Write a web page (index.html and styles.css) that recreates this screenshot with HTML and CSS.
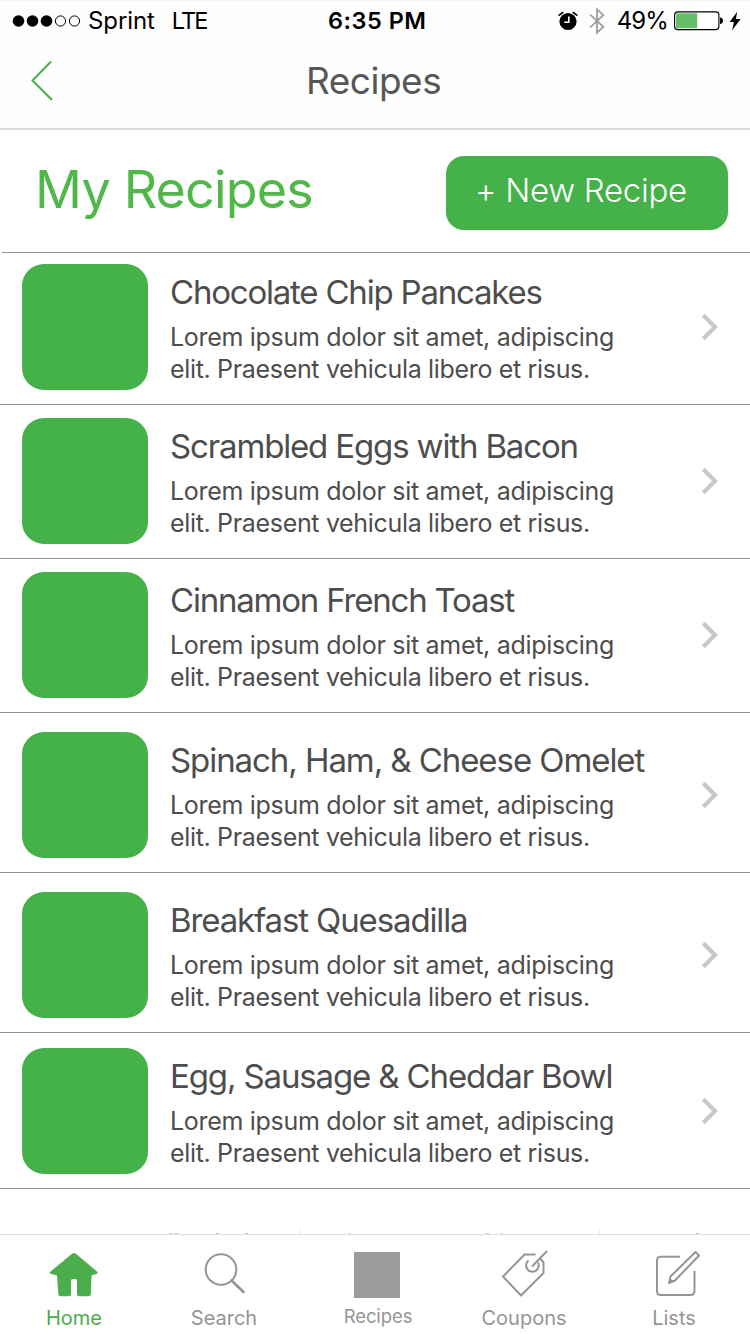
FILE: index.html
```html
<!DOCTYPE html>
<html lang="en">
<head>
<meta charset="utf-8">
<title>Recipes</title>
<link rel="stylesheet" href="styles.css">
</head>
<body>
<div class="screen">
  <header class="top">
    <div class="status">
      <div class="status-left">
        <svg class="signal" width="70" height="14" viewBox="0 0 70 14"><g fill="#000"><circle cx="6.5" cy="7" r="5.8"/><circle cx="20.5" cy="7" r="5.8"/><circle cx="34.5" cy="7" r="5.8"/></g><g fill="none" stroke="#000"><circle cx="48.5" cy="7" r="5.1"/><circle cx="62.5" cy="7" r="5.1"/></g></svg>
        <span class="carrier">Sprint</span>
        <span class="network">LTE</span>
      </div>
      <span class="clock">6:35 PM</span>
      <div class="status-right">
        <svg class="alarm" width="20" height="20" viewBox="0 0 20 20"><circle cx="10" cy="10.5" r="8.6" fill="#000"/><path d="M1.2 4.2 4.8 1.5M18.8 4.2 15.2 1.5" stroke="#000" stroke-width="1.6" stroke-linecap="round"/><path d="M10.8 5.6v5.6H6.2" fill="none" stroke="#fff" stroke-width="1.6"/></svg>
        <svg class="bluetooth" width="18" height="28" viewBox="0 0 18 28"><path d="M2 7.5 15.3 19.8 9 25.8V2.2L15.3 8.2 2 20.5" fill="none" stroke="#999" stroke-width="1.7"/></svg>
        <span class="percent">49%</span>
        <svg class="battery" width="50" height="20" viewBox="0 0 50 20"><rect x=".6" y=".9" width="44.3" height="17.7" rx="3" fill="#fff" stroke="#000" stroke-width="1.1"/><rect x="2" y="2.3" width="21.2" height="15" rx="1" fill="#65bf69"/><path d="M46 6.5q3 .3 3 3.3t-3 3.3z" fill="#000"/></svg>
        <svg class="bolt" width="12" height="20" viewBox="0 0 12 20"><path d="M8.2.8.6 11h4.3L3.2 19.2 11.6 8.1H6.9z" fill="#000"/></svg>
      </div>
    </div>
    <nav class="nav">
      <svg class="back" width="26" height="44" viewBox="0 0 26 44"><path d="M21 2.5 2.500 21.500 22 41" fill="none" stroke="#4bae4b" stroke-width="2"/></svg>
      <h1 class="nav-title">Recipes</h1>
    </nav>
  </header>

  <section class="heading">
    <h2 class="heading-title">My Recipes</h2>
    <button class="new-recipe">+ New Recipe</button>
  </section>

  <ul class="recipes">
    <li class="recipe recipe-first">
      <div class="thumb"></div>
      <div class="info"><h3 class="name name-tight">Chocolate Chip Pancakes</h3><p class="desc">Lorem ipsum dolor sit amet, adipiscing<br><span class="desc-end">elit. Praesent vehicula libero et risus.</span></p></div>
      <svg class="chevron" width="18" height="28" viewBox="0 0 18 28"><path d="M2.3 2.3 14 14 2.3 25.7" fill="none" stroke="#c7c7cc" stroke-width="4.2"/></svg>
    </li>
    <li class="recipe">
      <div class="thumb"></div>
      <div class="info"><h3 class="name name-mid">Scrambled Eggs with Bacon</h3><p class="desc">Lorem ipsum dolor sit amet, adipiscing<br><span class="desc-end">elit. Praesent vehicula libero et risus.</span></p></div>
      <svg class="chevron" width="18" height="28" viewBox="0 0 18 28"><path d="M2.3 2.3 14 14 2.3 25.7" fill="none" stroke="#c7c7cc" stroke-width="4.2"/></svg>
    </li>
    <li class="recipe">
      <div class="thumb"></div>
      <div class="info"><h3 class="name name-tight">Cinnamon French Toast</h3><p class="desc">Lorem ipsum dolor sit amet, adipiscing<br><span class="desc-end">elit. Praesent vehicula libero et risus.</span></p></div>
      <svg class="chevron" width="18" height="28" viewBox="0 0 18 28"><path d="M2.3 2.3 14 14 2.3 25.7" fill="none" stroke="#c7c7cc" stroke-width="4.2"/></svg>
    </li>
    <li class="recipe recipe-tall">
      <div class="thumb"></div>
      <div class="info"><h3 class="name name-wide">Spinach, Ham, &amp; Cheese Omelet</h3><p class="desc">Lorem ipsum dolor sit amet, adipiscing<br><span class="desc-end">elit. Praesent vehicula libero et risus.</span></p></div>
      <svg class="chevron" width="18" height="28" viewBox="0 0 18 28"><path d="M2.3 2.3 14 14 2.3 25.7" fill="none" stroke="#c7c7cc" stroke-width="4.2"/></svg>
    </li>
    <li class="recipe recipe-tall">
      <div class="thumb"></div>
      <div class="info"><h3 class="name">Breakfast Quesadilla</h3><p class="desc">Lorem ipsum dolor sit amet, adipiscing<br><span class="desc-end">elit. Praesent vehicula libero et risus.</span></p></div>
      <svg class="chevron" width="18" height="28" viewBox="0 0 18 28"><path d="M2.3 2.3 14 14 2.3 25.7" fill="none" stroke="#c7c7cc" stroke-width="4.2"/></svg>
    </li>
    <li class="recipe recipe-last">
      <div class="thumb"></div>
      <div class="info"><h3 class="name">Egg, Sausage &amp; Cheddar Bowl</h3><p class="desc">Lorem ipsum dolor sit amet, adipiscing<br><span class="desc-end">elit. Praesent vehicula libero et risus.</span></p></div>
      <svg class="chevron" width="18" height="28" viewBox="0 0 18 28"><path d="M2.3 2.3 14 14 2.3 25.7" fill="none" stroke="#c7c7cc" stroke-width="4.2"/></svg>
    </li>
  </ul>

  <svg class="peek" width="750" height="4" viewBox="0 0 750 4"><path d="M299.5 0v4M599.5 0v4" stroke="#e9e9e9"/><path d="M169 3.5h3M175 3.5h3M216 3.5h3M245 3.5h3M349 3.5h2M486 3.5h3M501 3.5h2M696 3.5h3" stroke="#ccc"/></svg>

  <footer class="tabs">
    <a class="tab tab-active">
      <svg width="60" height="60" viewBox="0 0 60 60"><path d="M28.4 9.6q1.6-1.2 3.2 0L53.5 28q.8 1.4-.7 1.8L47.6 31.5 46.8 50q-.2 2.300-2.200 2.300H35q-2 0-2-2.300V36.500q0-1.500-1.500-1.500h-3q-1.500 0-1.500 1.500V50q0 2.300-2 2.300H16.500q-2 0-2.200-2.300L13 31.500 6.500 29.800Q5.300 29.300 6 28z" fill="#4bad4c"/></svg>
      <span class="label">Home</span>
    </a>
    <a class="tab">
      <svg width="60" height="60" viewBox="0 0 60 60"><g fill="none" stroke="#959595" stroke-width="2"><circle cx="27" cy="25.500" r="15.300"/><path d="M37.500 36.500 49.500 48" stroke-width="2.600" stroke-linecap="round"/></g></svg>
      <span class="label">Search</span>
    </a>
    <a class="tab tab-recipes">
      <svg width="60" height="60" viewBox="0 0 60 60"><rect x="6" y="8" width="46" height="46" fill="#9b9b9b"/></svg>
      <span class="label">Recipes</span>
    </a>
    <a class="tab">
      <svg width="60" height="60" viewBox="0 0 60 60"><g fill="none" stroke="#959595" stroke-width="2" stroke-linejoin="round"><path d="M41.500 10.500H30.500L9 32.500 27 51.500 49.500 29V18.500L46 14.500"/><path d="M34.500 16.500A6.300 6.300 0 1 0 44 18.500M53 7 38 22.500"/></g></svg>
      <span class="label">Coupons</span>
    </a>
    <a class="tab">
      <svg width="60" height="60" viewBox="0 0 60 60"><g fill="none" stroke="#959595" stroke-width="2" stroke-linejoin="round"><path d="M36 12.800H17Q13 12.800 13 17V47Q13 51 17 51H46.500Q50.500 51 50.500 47V27"/><path d="M51.500 8 55 11.500 31 36.500 25 39 26.500 32.500z"/></g><path d="m24.500 40 1.800-5.500 4 3z" fill="#959595"/></svg>
      <span class="label">Lists</span>
    </a>
  </footer>
</div>
</body>
</html>
```
FILE: styles.css
```css
* { box-sizing: border-box; margin: 0; padding: 0; }
body { background: #fff; font-family: Inter, sans-serif; color: #4d4d4d; }
svg { display: block; flex: none; }

.screen { width: 750px; height: 1334px; overflow: hidden; display: flex; flex-direction: column; }

.top { flex: none; height: 130px; background: #fefefe; border-top: 1px solid #f3f3f3; border-bottom: 2px solid #d9d9d9; }
.status { height: 39px; display: grid; grid-template-columns: 1fr 100px 1fr; color: #000; font-size: 24px; line-height: 39px; white-space: nowrap; }
.status-left, .status-right { display: flex; align-items: center; }
.status-left { padding-left: 12px; }
.carrier { margin-left: 6px; letter-spacing: -0.1px; }
.network { margin-left: 17px; font-size: 23.5px; letter-spacing: -1.8px; }
.clock { padding-left: 3px; font-weight: 600; font-size: 23.5px; letter-spacing: 0.5px; }
.status-right { justify-content: flex-end; padding-right: 9px; }
.bluetooth { margin-left: 10px; }
.percent { margin-left: 11px; letter-spacing: -0.9px; }
.battery { margin-left: 6px; }
.bolt { margin-left: 5px; }

.nav { height: 81px; display: grid; grid-template-columns: 290px 1fr 290px; align-items: center; }
.back { margin-left: 30px; }
.nav-title { font-size: 37px; font-weight: 400; letter-spacing: -0.5px; line-height: 81px; padding-left: 16px; color: #575757; }

.heading { flex: none; width: 748px; height: 123px; margin-left: 2px; display: flex; justify-content: space-between; border-bottom: 1px solid #949494; }
.heading-title { padding-left: 33px; font-size: 52px; font-weight: 400; line-height: 120px; letter-spacing: -0.8px; color: #50b848; white-space: nowrap; }
.new-recipe { width: 282px; height: 74px; margin: 26px 22px 0 0; padding: 0 0 6px 29px; border: 0; border-radius: 18px; background: #44b149; color: #fff; font: 350 33px/68px Inter, sans-serif; letter-spacing: -0.3px; text-align: left; white-space: nowrap; }

.recipes { flex: none; list-style: none; }
.recipe { height: 154px; padding: 13px 31px 0 22px; display: flex; border-bottom: 1px solid #949494; }
.recipe-first { height: 152px; padding-top: 11px; }
.recipe-tall { height: 160px; padding-top: 19px; }
.recipe-last { height: 156px; padding-top: 15px; }
.thumb { flex: none; width: 126px; height: 126px; border-radius: 22px; background: #44b149; }
.info { flex: 1; padding: 8px 0 0 22px; white-space: nowrap; }
.name { font-size: 33px; font-weight: 400; line-height: 40px; letter-spacing: -1.13px; }
.name-wide { letter-spacing: -1.07px; }
.name-mid { letter-spacing: -1.15px; }
.name-tight { letter-spacing: -1.21px; }
.desc { margin-top: 9px; font-size: 25px; line-height: 32px; letter-spacing: -0.3px; }
.desc-end { letter-spacing: -0.33px; }
.chevron { margin-top: 49px; }

.peek { margin-top: 41px; }

.tabs { flex: none; height: 100px; padding-top: 9px; display: flex; border-top: 1px solid #dedede; }
.tab { width: 150px; padding-right: 2px; display: flex; flex-direction: column; align-items: center; color: #959595; font-size: 20px; line-height: 28px; }
.tab-active { color: #4bad4c; }
.tab-recipes { padding: 0 0 0 6px; font-size: 18.5px; line-height: 24px; letter-spacing: -0.1px; }
```
